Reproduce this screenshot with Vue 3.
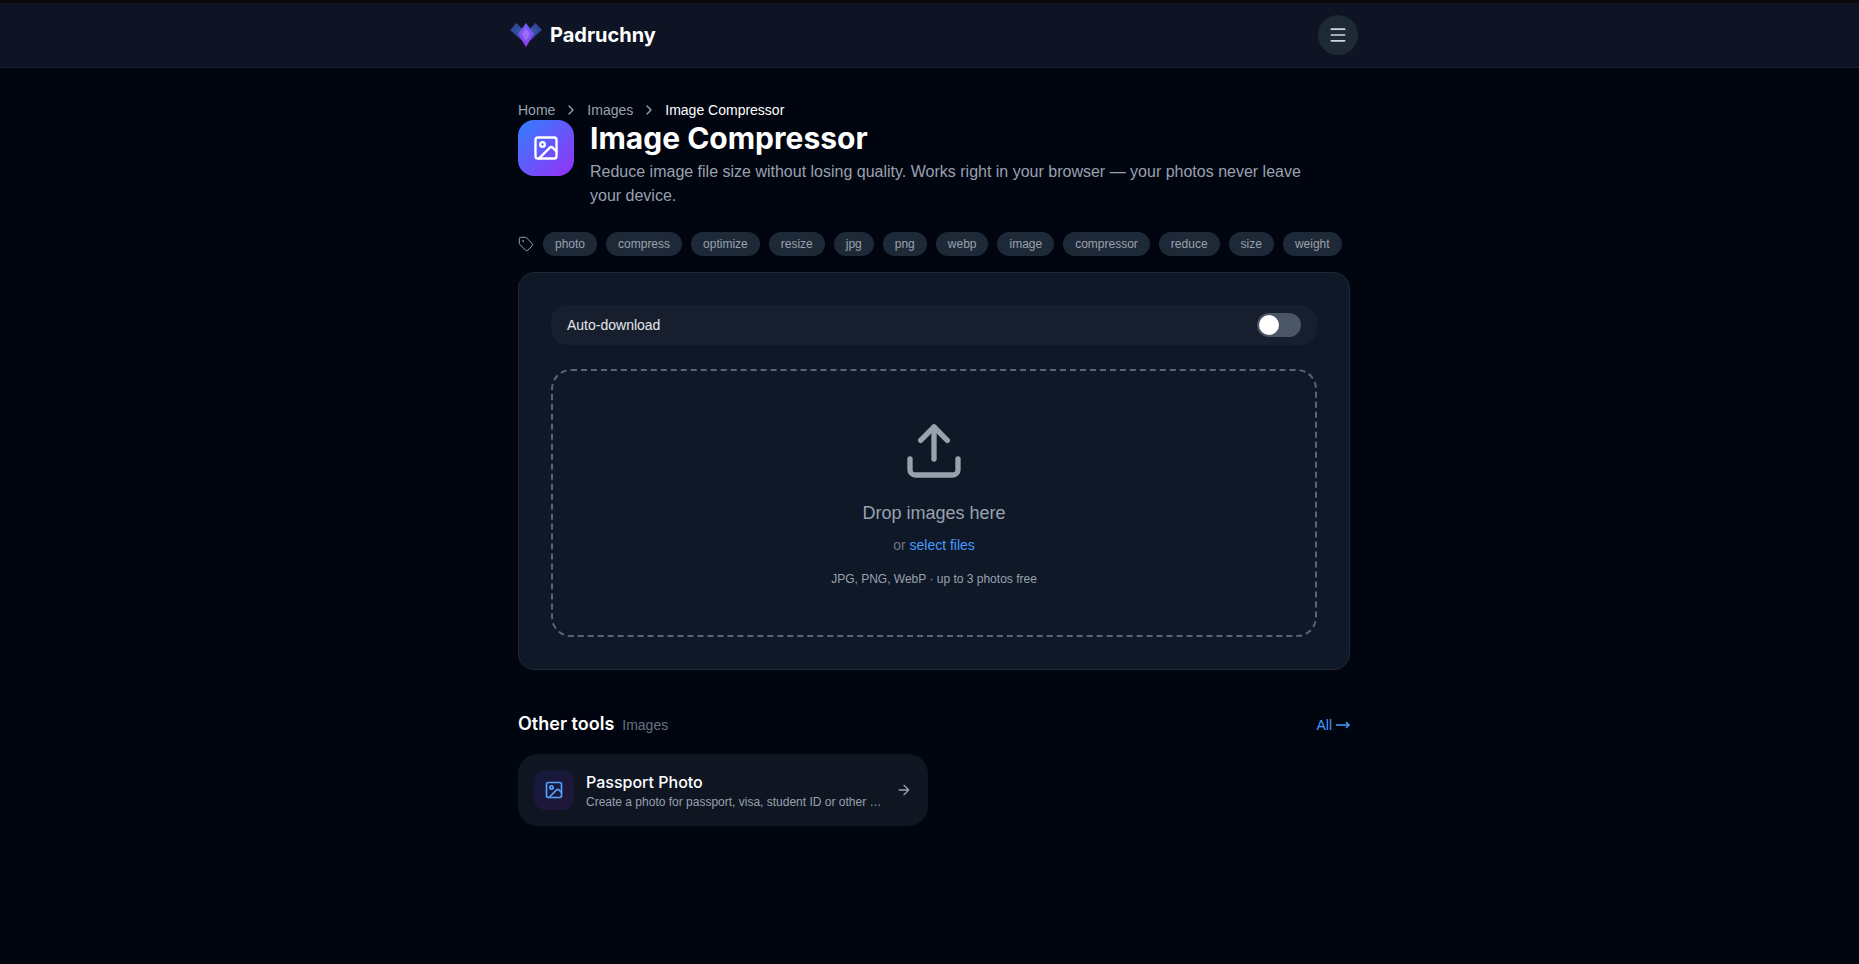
<template>
  <div class="page">
    <header class="header">
      <div class="header-inner">
        <a href="#" class="brand">
          <svg class="brand-logo" viewBox="0 0 32 32" aria-hidden="true">
            <defs>
              <linearGradient id="gem" x1="0" y1="0" x2="0" y2="1">
                <stop offset="0" stop-color="#6d5cf6" />
                <stop offset="1" stop-color="#9340f5" />
              </linearGradient>
            </defs>
            <path d="M0 11l6.500-7L16 14l-5 7z" fill="#31479a" />
            <path d="M32 11l-6.500-7L16 14l5 7z" fill="#31479a" />
            <path d="M13 11l-4 5-4-4 5-4z" fill="#33589c" />
            <path d="M19 11l4 5 4-4-5-4z" fill="#33589c" />
            <path d="M16 4l8 11-8 13-8-13z" fill="url(#gem)" />
            <path d="M16 9l4 6-4 7-4-7z" fill="#9b6cf7" />
          </svg>
          <span>Padruchny</span>
        </a>
        <button class="menu-button" type="button" aria-label="Menu">
          <svg class="icon icon-20" viewBox="0 0 24 24"><path d="M4 5h16M4 12h16M4 19h16" /></svg>
        </button>
      </div>
    </header>

    <main class="main">
      <nav class="breadcrumb" aria-label="Breadcrumb">
        <a href="#">Home</a>
        <svg class="icon icon-16" viewBox="0 0 24 24"><path d="m9 18 6-6-6-6" /></svg>
        <a href="#">Images</a>
        <svg class="icon icon-16" viewBox="0 0 24 24"><path d="m9 18 6-6-6-6" /></svg>
        <span class="current">Image Compressor</span>
      </nav>

      <div class="intro">
        <div class="intro-icon">
          <svg class="icon icon-28" viewBox="0 0 24 24">
            <rect x="3" y="3" width="18" height="18" rx="2" />
            <circle cx="9" cy="9" r="2" />
            <path d="m21 15-3.086-3.086a2 2 0 0 0-2.828 0L6 21" />
          </svg>
        </div>
        <div class="intro-text">
          <h1>Image Compressor</h1>
          <p>Reduce image file size without losing quality. Works right in your browser — your photos never leave your device.</p>
        </div>
      </div>

      <div class="tags">
        <svg class="icon icon-16 tag-icon" viewBox="0 0 24 24">
          <path d="M12.586 2.586A2 2 0 0 0 11.172 2H4a2 2 0 0 0-2 2v7.172a2 2 0 0 0 .586 1.414l8.704 8.704a2.426 2.426 0 0 0 3.420 0l6.580-6.580a2.426 2.426 0 0 0 0-3.420z" />
          <circle cx="7.500" cy="7.500" r=".5" fill="currentColor" />
        </svg>
        <span v-for="tag in tags" :key="tag" class="tag">{{ tag }}</span>
      </div>

      <section class="card">
        <label class="option">
          <span>Auto-download</span>
          <input v-model="autoDownload" type="checkbox" role="switch" class="switch" />
        </label>

        <div class="dropzone" @dragover.prevent @drop.prevent>
          <svg class="icon icon-64" viewBox="0 0 24 24">
            <path d="M12 3v12" />
            <path d="m17 8-5-5-5 5" />
            <path d="M21 15v4a2 2 0 0 1-2 2H5a2 2 0 0 1-2-2v-4" />
          </svg>
          <p class="drop-title">Drop images here</p>
          <p class="drop-or">or <button type="button" class="select-files" @click="fileInput.click()">select files</button></p>
          <p class="drop-hint">JPG, PNG, WebP · up to 3 photos free</p>
          <input ref="fileInput" type="file" accept="image/jpeg,image/png,image/webp" multiple hidden />
        </div>
      </section>

      <section class="other">
        <div class="other-head">
          <h2>Other tools</h2>
          <span class="category">Images</span>
          <a href="#" class="all-link">All
            <svg class="all-arrow" viewBox="0 0 14 10" aria-hidden="true"><path d="M0 5h13M10 2l3 3-3 3" /></svg>
          </a>
        </div>
        <div class="tools">
          <a v-for="tool in tools" :key="tool.name" href="#" class="tool">
            <span class="tool-icon">
              <svg class="icon icon-20" viewBox="0 0 24 24">
                <rect x="3" y="3" width="18" height="18" rx="2" />
                <circle cx="9" cy="9" r="2" />
                <path d="m21 15-3.086-3.086a2 2 0 0 0-2.828 0L6 21" />
              </svg>
            </span>
            <span class="tool-text">
              <span class="tool-name">{{ tool.name }}</span>
              <span class="tool-desc">{{ tool.description }}</span>
            </span>
            <svg class="icon icon-16 tool-arrow" viewBox="0 0 24 24"><path d="M5 12h14M12 5l7 7-7 7" /></svg>
          </a>
        </div>
      </section>
    </main>
  </div>
</template>

<script setup>
import { ref } from 'vue'

const autoDownload = ref(false)
const fileInput = ref(null)

const tags = [
  'photo', 'compress', 'optimize', 'resize', 'jpg', 'png',
  'webp', 'image', 'compressor', 'reduce', 'size', 'weight',
]

const tools = [
  {
    name: 'Passport Photo',
    description: 'Create a photo for passport, visa, student ID or other …',
  },
]
</script>

<style>
body {
  margin: 0;
  background: #010510;
}
</style>

<style scoped>
* {
  box-sizing: border-box;
}

.page {
  min-height: 100vh;
  border-top: 3px solid #09090b;
  background: #010510;
  color: #ffffff;
  font-family: "Liberation Sans", Arial, sans-serif;
  font-size: 14px;
  line-height: 20px;
}

a {
  color: inherit;
  text-decoration: none;
}

h1,
h2,
p {
  margin: 0;
}

button {
  padding: 0;
  border: none;
  background: none;
  font: inherit;
  cursor: pointer;
}

.icon {
  flex-shrink: 0;
  fill: none;
  stroke: currentColor;
  stroke-width: 2;
  stroke-linecap: round;
  stroke-linejoin: round;
}

.icon-16 {
  width: 16px;
  height: 16px;
}

.icon-20 {
  width: 20px;
  height: 20px;
}

.icon-28 {
  width: 28px;
  height: 28px;
}

.icon-64 {
  width: 64px;
  height: 64px;
}

.header,
.page {
  padding-left: 9px;
}

.header {
  margin-left: -9px;
  border-bottom: 1px solid #1a2233;
  background: #0e1423;
}

.header-inner {
  display: flex;
  align-items: center;
  justify-content: space-between;
  max-width: 896px;
  height: 64px;
  margin: 0 auto;
  padding: 0 24px;
}

.brand {
  display: flex;
  align-items: center;
  gap: 8px;
  font-family: Inter, sans-serif;
  font-size: 20px;
  font-weight: 700;
  line-height: 28px;
}

.brand-logo {
  width: 32px;
  height: 32px;
}

.menu-button {
  display: flex;
  align-items: center;
  justify-content: center;
  width: 40px;
  height: 40px;
  border-radius: 50%;
  background: #1e2936;
  color: #d1d5dc;
}

.main {
  max-width: 896px;
  margin: 0 auto;
  padding: 32px;
}

.breadcrumb {
  display: flex;
  align-items: center;
  gap: 8px;
  color: #99a1af;
}

.current {
  color: #ffffff;
}

.intro {
  display: flex;
  gap: 16px;
}

.intro-icon {
  display: flex;
  flex-shrink: 0;
  align-items: center;
  justify-content: center;
  width: 56px;
  height: 56px;
  border-radius: 16px;
  background: linear-gradient(135deg, #3080ff, #9830f5);
}

.intro-text {
  padding-right: 24px;
}

h1 {
  margin-bottom: 4px;
  font-family: Inter, sans-serif;
  font-size: 30px;
  font-weight: 700;
  line-height: 36px;
}

.intro-text p {
  color: #99a1af;
  font-size: 16px;
  line-height: 24px;
}

.tags {
  display: flex;
  align-items: center;
  gap: 9px;
  margin: 24px 0 16px;
}

.tag-icon {
  color: #99a1af;
  stroke-width: 1.5;
}

.tag {
  padding: 4px 12px;
  border-radius: 12px;
  background: #1e2937;
  color: #99a1af;
  font-size: 12px;
  line-height: 16px;
}

.card {
  padding: 32px;
  border: 1px solid #1d2736;
  border-radius: 16px;
  background: #0f1827;
}

.option {
  display: flex;
  align-items: center;
  justify-content: space-between;
  margin-bottom: 24px;
  padding: 8px 16px;
  border-radius: 16px;
  background: #171f2e;
  color: #e5e7eb;
}

.switch {
  width: 44px;
  height: 24px;
  margin: 0;
  padding: 2px;
  border-radius: 12px;
  appearance: none;
  background: #4a5565;
  cursor: pointer;
}

.switch::before {
  display: block;
  width: 20px;
  height: 20px;
  border-radius: 50%;
  background: #ffffff;
  content: "";
}

.switch:checked {
  padding-left: 22px;
  background: #2b7fff;
}

.dropzone {
  display: flex;
  flex-direction: column;
  align-items: center;
  padding: 48px;
  border: 2px dashed #5a6473;
  border-radius: 20px;
  color: #99a1af;
}

.drop-title {
  margin-top: 16px;
  font-size: 18px;
  line-height: 28px;
}

.drop-or {
  margin: 8px 0 16px;
  color: #6a7282;
}

.select-files {
  color: #459bff;
}

.drop-hint {
  font-size: 12px;
  line-height: 16px;
}

.other {
  margin-top: 40px;
}

.other-head {
  display: flex;
  align-items: baseline;
  gap: 8px;
  margin-bottom: 16px;
}

h2 {
  font-family: Inter, sans-serif;
  font-size: 18px;
  font-weight: 600;
  line-height: 28px;
}

.category {
  color: #6a7282;
}

.all-link {
  display: flex;
  align-items: center;
  gap: 4px;
  margin-left: auto;
  color: #459bff;
}

.all-arrow {
  width: 14px;
  height: 10px;
  fill: none;
  stroke: currentColor;
  stroke-width: 1.5;
}

.tools {
  display: grid;
  grid-template-columns: 1fr 1fr;
  gap: 12px;
}

.tool {
  display: flex;
  align-items: center;
  gap: 12px;
  min-width: 0;
  padding: 16px;
  border-radius: 20px;
  background: #0f1622;
}

.tool-icon {
  display: flex;
  flex-shrink: 0;
  align-items: center;
  justify-content: center;
  width: 40px;
  height: 40px;
  border-radius: 12px;
  background: linear-gradient(135deg, #14193a, #21163a);
  color: #51a2ff;
}

.tool-text {
  display: flex;
  flex: 1;
  flex-direction: column;
  min-width: 0;
}

.tool-name {
  font-family: Inter, sans-serif;
  font-size: 16px;
  font-weight: 500;
  line-height: 24px;
}

.tool-desc {
  overflow: hidden;
  color: #99a1af;
  font-size: 12px;
  line-height: 16px;
  text-overflow: ellipsis;
  white-space: nowrap;
}

.tool-arrow {
  color: #99a1af;
}
</style>
